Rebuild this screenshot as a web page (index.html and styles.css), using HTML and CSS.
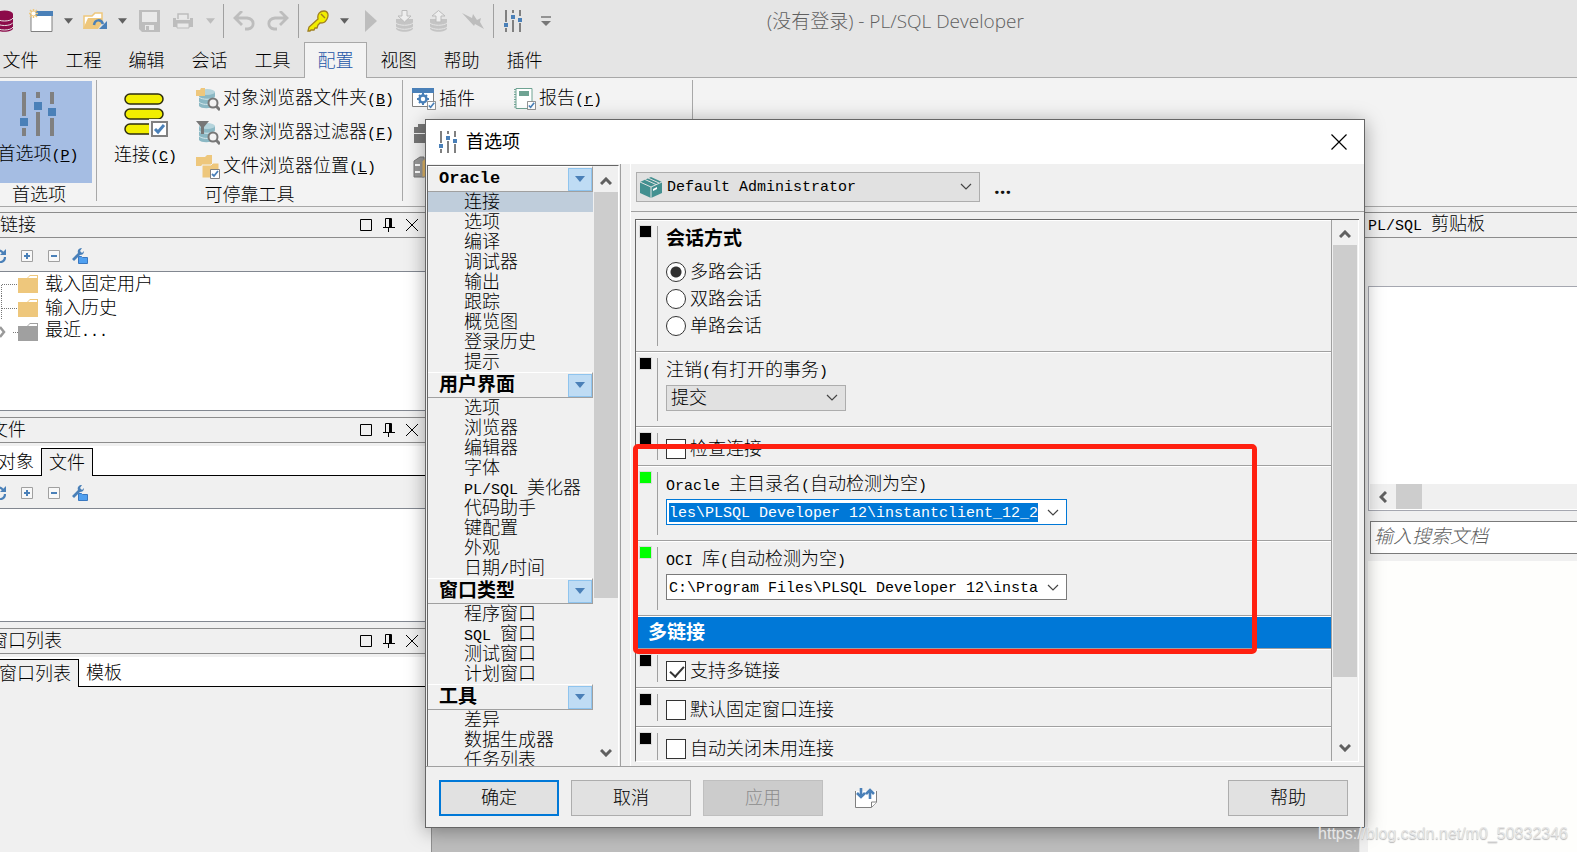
FILE: index.html
```html
<!DOCTYPE html>
<html lang="zh-CN">
<head>
<meta charset="utf-8">
<title>PL/SQL Developer</title>
<link rel="stylesheet" href="styles.css">
</head>
<body>
<svg class="defs" aria-hidden="true">
  <symbol id="sliders" viewBox="0 0 18 22"><path d="M2 0v12M2 18v4M9 0v3M9 10v12M16 0v6M16 13v9" stroke="#808080" stroke-width="2"/><path d="M0 13h4v4H0zM7 5h4v4H7zM14 8h4v4h-4z" fill="#4a80b8"/></symbol>
  <symbol id="caret" viewBox="0 0 10 6"><path d="M0 0h10L5 6z" fill="currentColor"/></symbol>
  <symbol id="db" viewBox="0 0 18 22"><path d="M0 4v14c0 5 17 5 17 0V4z" fill="currentColor"/><ellipse cx="8.500" cy="4" rx="8.500" ry="3.500" fill="currentColor"/><path d="M0 8c2 4 15 4 17 0M0 12.500c2 4 15 4 17 0M0 17c2 4 15 4 17 0" fill="none" stroke="#e5e5e5"/></symbol>
  <symbol id="max" viewBox="0 0 12 12"><path d="M.5.5h11v11H.5z" fill="none" stroke="#000"/></symbol>
  <symbol id="pin" viewBox="0 0 12 14"><path d="M2.500 9V.5h6V9M0 9.500h12M5.500 10v4" fill="none" stroke="#000"/><path d="M6 1h3v8H6z"/></symbol>
  <symbol id="cross" viewBox="0 0 12 12"><path d="M0 0l12 12M12 0L0 12" stroke="#000"/></symbol>
  <symbol id="refresh" viewBox="0 0 14 14"><path d="M1 6a5.500 5.500 0 0 1 10-2M13 8a5.500 5.500 0 0 1-10 3" fill="none" stroke="#4a80b8" stroke-width="2.200"/><path d="M14 0v6H8z" fill="#4a80b8"/></symbol>
  <symbol id="plus" viewBox="0 0 12 12"><path d="M.5.5h11v11H.5z" fill="#fff" fill-opacity=".5" stroke="#a0a0a0"/><path d="M3 6h6M6 3v6" stroke="#4a80b8" stroke-width="2"/></symbol>
  <symbol id="minus" viewBox="0 0 12 12"><path d="M.5.5h11v11H.5z" fill="#fff" fill-opacity=".5" stroke="#a0a0a0"/><path d="M3 6h6" stroke="#4a80b8" stroke-width="2"/></symbol>
  <symbol id="wrench" viewBox="0 0 16 16"><path d="M0 11l6-6c-1-3 1-5 4-5L8 3l2 2 2-2c0 3-2 4-4 4l-6 6z" fill="#4a80b8"/><path d="M6.500 15.500V8.500h3l1 1h5v6z" fill="#50a0f0" stroke="#3a78c0"/></symbol>
  <symbol id="folder" viewBox="0 0 20 18"><path d="M0 3h9l3-3h8v18H0z" fill="currentColor"/><path d="M10 3l2-2h7v2z" fill="#fff"/></symbol>
  <symbol id="check" viewBox="0 0 10 10"><path d="M.5.5h9v9h-9z" fill="#fff" stroke="#808080"/><path d="M2 5l2 2 4-5" fill="none" stroke="#4a80b8" stroke-width="1.800"/></symbol>
  <symbol id="up" viewBox="0 0 12 8"><path d="M1 7l5-5 5 5" fill="none" stroke="#606060" stroke-width="3"/></symbol>
  <symbol id="down" viewBox="0 0 12 8"><path d="M1 1l5 5 5-5" fill="none" stroke="#606060" stroke-width="3"/></symbol>
  <symbol id="thin" viewBox="0 0 12 7"><path d="M1 1l5 5 5-5" fill="none" stroke="#444" stroke-width="1.200"/></symbol>
  <symbol id="cylinder" viewBox="0 0 24 24"><path d="M3 5v14c2 3 12 3 16 0V5z" fill="#8bb8c4"/><ellipse cx="11" cy="5" rx="8" ry="3" fill="#b5d4dc"/><path d="M3 10c3 3 13 3 16 0M3 15c3 3 10 3 13 1" fill="none" stroke="#d5e8ec"/><circle cx="17" cy="16" r="4.500" fill="#f3f3f3" stroke="#777" stroke-width="2"/><path d="M20 19l4 4" stroke="#777" stroke-width="3"/></symbol>
</svg>

<div class="app">
  <header class="quick">
    <div class="tools">
      <button class="tool first" aria-label="数据库"><svg class="dbi" width="18" height="22"><use href="#db"/></svg></button>
      <button class="tool" aria-label="新建"><svg width="24" height="24" viewBox="0 0 24 24"><path d="M2 5v17.500h21V7" fill="#fff" stroke="#808080"/><path d="M6 2h18v5H6z" fill="#4a80b8"/><path d="M4.500 0v9M0 4.500h9M1 1l7 7M8 1L1 8" stroke="#eec77c" stroke-width="1.500"/><circle cx="4.500" cy="4.500" r="2" fill="#fff"/></svg></button>
      <button class="tool drop" aria-label="新建选项"><svg width="9" height="6"><use href="#caret"/></svg></button>
      <button class="tool" aria-label="打开"><svg width="24" height="18" viewBox="0 0 24 18"><path d="M1 17V4h8l3-3h7v9" fill="#fff" stroke="#eec77c" stroke-width="1.500"/><path d="M0 17L5 6h14v5l-4 6z" fill="#eec77c"/><path d="M11 13c1-6 7-6 9-1" fill="none" stroke="#4a80b8" stroke-width="2.500"/><path d="M24 9v8h-8z" fill="#4a80b8"/></svg></button>
      <button class="tool drop" aria-label="打开选项"><svg width="9" height="6"><use href="#caret"/></svg></button>
      <button class="tool" aria-label="保存"><svg width="21" height="22" viewBox="0 0 21 22"><path d="M0 0h21v22H3l-3-3z" fill="#bdbdbd"/><path d="M3 2h15v10H3zM6 15h9v5H6z" fill="#e9e9e9"/><path d="M7 16h3v4H7z" fill="#bdbdbd"/></svg></button>
      <button class="tool" aria-label="打印"><svg width="20" height="16" viewBox="0 0 20 16"><path d="M5 6V1h10v5" fill="#e9e9e9" stroke="#bdbdbd" stroke-width="1.500"/><path d="M0 5h3v2h14V5h3v9H0z" fill="#bdbdbd"/><path d="M4 10h12v5H4z" fill="#e9e9e9" stroke="#bdbdbd"/></svg></button>
      <button class="tool drop off" aria-label="打印选项"><svg width="9" height="6"><use href="#caret"/></svg></button>
      <span class="vsep"></span>
      <button class="tool" aria-label="撤销"><svg width="22" height="20" viewBox="0 0 22 20"><path d="M2 7h12c8 1 8 10 1 11h-3M9 0L2 7l7 7" fill="none" stroke="#bdbdbd" stroke-width="2.800"/></svg></button>
      <button class="tool" aria-label="重做"><svg width="22" height="20" viewBox="0 0 22 20"><path d="M20 7H8C0 8 0 17 7 18h3M13 0l7 7-7 7" fill="none" stroke="#bdbdbd" stroke-width="2.800"/></svg></button>
      <span class="vsep"></span>
      <button class="tool key" aria-label="登录"><svg width="22" height="22" viewBox="0 0 22 22"><path d="M1 21l1-4 9-8c-1-5 2-8 6-8s5 4 3 8-4 4-7 4l-2 2-1 3H8l-1 2H4l-1 1z" fill="#f2ee00" stroke="#a08020" stroke-width="1.300"/><path d="M14 4l4 4" stroke="#a08020" stroke-width="1.500"/></svg></button>
      <button class="tool drop" aria-label="登录选项"><svg width="9" height="6"><use href="#caret"/></svg></button>
      <button class="tool" aria-label="执行"><svg width="12" height="22" viewBox="0 0 12 22"><path d="M0 0l12 11L0 22z" fill="#bdbdbd"/></svg></button>
      <button class="tool" aria-label="提交"><svg width="18" height="22" viewBox="0 0 18 22"><path d="M0 9v9c0 5 17 5 17 0V9z" fill="#c4c4c4"/><path d="M0 13c3 3 14 3 17 0M0 17c3 3 14 3 17 0" fill="none" stroke="#e5e5e5"/><path d="M6 .5h5V6h4l-6.500 6L2 6h4z" fill="#eee" stroke="#bbb"/></svg></button>
      <button class="tool" aria-label="回滚"><svg width="18" height="22" viewBox="0 0 18 22"><path d="M0 9v9c0 5 17 5 17 0V9z" fill="#c4c4c4"/><path d="M0 13c3 3 14 3 17 0M0 17c3 3 14 3 17 0" fill="none" stroke="#e5e5e5"/><path d="M6 12h5V6h4L8.500.500 2 6h4z" fill="#eee" stroke="#bbb"/></svg></button>
      <button class="tool" aria-label="中断"><svg width="22" height="18" viewBox="0 0 22 18"><path d="M0 1l10 5 1-4 4 6 4-2-1 4 4 7-9-5-1 2z" fill="#bdbdbd"/></svg></button>
      <span class="vsep"></span>
      <button class="tool key" aria-label="首选项"><svg width="18" height="22"><use href="#sliders"/></svg></button>
      <button class="tool" aria-label="更多"><svg width="10" height="11" viewBox="0 0 10 11"><path d="M0 1h10" stroke="#777" stroke-width="1.500"/><path d="M0 5h10l-5 5z" fill="#777"/></svg></button>
    </div>
    <h1 class="wintitle">(没有登录) - PL/SQL Developer</h1>
  </header>

  <nav class="menu">
    <button>文件</button><button>工程</button><button>编辑</button><button>会话</button><button>工具</button><button class="on">配置</button><button>视图</button><button>帮助</button><button>插件</button>
  </nav>

  <section class="ribbon">
    <div class="group g1">
      <button class="big prefs"><svg width="36" height="44"><use href="#sliders"/></svg><span>首选项<i>(<u>P</u>)</i></span></button>
      <div class="caption">首选项</div>
    </div>
    <div class="group g2">
      <div class="grow">
        <button class="big"><svg width="44" height="44" viewBox="0 0 44 44"><g fill="#f2ee00" stroke="#2c2c10" stroke-width="1.500"><rect x="1" y="1" width="38" height="10" rx="5"/><rect x="1" y="16" width="38" height="10" rx="5"/><rect x="1" y="31" width="38" height="10" rx="5"/></g><path d="M25 26h19v18H25z" fill="#f3f3f3"/><path d="M28 29h15v14H28z" fill="#fff" stroke="#808080" stroke-width="2"/><path d="M31 36l3 3 6-7" fill="none" stroke="#4a80b8" stroke-width="3"/></svg><span>连接<i>(<u>C</u>)</i></span></button>
        <div class="links">
          <button><svg width="24" height="24" viewBox="0 0 24 24"><use href="#cylinder"/><path d="M0 3h4l1-2h4v8H0z" fill="#eec77c"/></svg><span>对象浏览器文件夹<i>(<u>B</u>)</i></span></button>
          <button><svg width="24" height="24" viewBox="0 0 24 24"><use href="#cylinder"/><path d="M0 0h13L8 6v7H5V6z" fill="#777"/></svg><span>对象浏览器过滤器<i>(<u>F</u>)</i></span></button>
          <button><svg width="24" height="24" viewBox="0 0 24 24"><path d="M0 2h9l2-2h5v11H0z" fill="#eec77c"/><path d="M6 10h9l2-2h6v15H6z" fill="#eec77c" stroke="#f3f3f3"/><use href="#check" x="14" y="14" width="10" height="10"/></svg><span>文件浏览器位置<i>(<u>L</u>)</i></span></button>
        </div>
      </div>
      <div class="caption">可停靠工具</div>
    </div>
    <div class="group g3">
      <div class="links">
        <button><svg width="24" height="22" viewBox="0 0 24 22"><path d="M.5.5h21v18H.5z" fill="#fff" stroke="#808080"/><path d="M0 0h22v5H0z" fill="#4a80b8"/><circle cx="11" cy="11" r="3.500" fill="none" stroke="#4a80b8" stroke-width="2.500"/><path d="M11 5v3M11 14v3M5 11h3M14 11h3M7 7l2 2M15 7l-2 2M7 15l2-2" stroke="#4a80b8" stroke-width="2"/><use href="#check" x="15" y="13" width="9" height="9"/></svg><span>插件</span></button>
        <button aria-label="工具"><svg width="24" height="20" viewBox="0 0 24 20"><path d="M2 4h4V1h10v3h8v6H2zM2 11h22v9H2z" fill="#777"/></svg></button>
        <button aria-label="文档"><svg width="24" height="24" viewBox="0 0 24 24"><path d="M2 6l6-4h4v20H2z" fill="#999" stroke="#777"/><path d="M10 6l5-4h6v20H10z" fill="#e4b867" stroke="#999"/><path d="M3 10h5M3 17h5" stroke="#fff" stroke-width="2"/></svg></button>
      </div>
      <div class="links">
        <button><svg width="22" height="22" viewBox="0 0 22 22"><path d="M2 .5h16v20H2z" fill="#fff" stroke="#6fa393"/><path d="M5 3h10v5H5z" fill="#6fa393"/><path d="M1 1v20" stroke="#6fa393" stroke-width="2" stroke-dasharray="1 1.500"/><use href="#check" x="13" y="13" width="9" height="9"/></svg><span>报告<i>(<u>r</u>)</i></span></button>
      </div>
    </div>
  </section>

  <main class="work">
    <aside class="left">
      <section class="dock p1">
        <header class="cap"><h2>链接</h2><svg width="12" height="12"><use href="#max"/></svg><svg width="12" height="14"><use href="#pin"/></svg><svg width="12" height="12"><use href="#cross"/></svg></header>
        <div class="mini"><svg width="14" height="14"><use href="#refresh"/></svg><svg width="12" height="12"><use href="#plus"/></svg><svg width="12" height="12"><use href="#minus"/></svg><svg width="16" height="16"><use href="#wrench"/></svg></div>
        <ul class="tree">
          <li><svg class="dots" width="18" height="24" viewBox="0 0 18 24"><path d="M1.500 24V12.500H18" fill="none" stroke="#777" stroke-dasharray="1 1"/></svg><svg class="fold" width="20" height="18"><use href="#folder"/></svg><span>载入固定用户</span></li>
          <li><svg class="dots" width="18" height="24" viewBox="0 0 18 24"><path d="M1.500 0v24M2 12.500h16" fill="none" stroke="#777" stroke-dasharray="1 1"/></svg><svg class="fold" width="20" height="18"><use href="#folder"/></svg><span>输入历史</span></li>
          <li><svg class="dots" width="18" height="24" viewBox="0 0 18 24"><path d="M13 12.500h5" stroke="#777" stroke-dasharray="1 1"/><path d="M0 7l4 5-4 5" fill="none" stroke="#999" stroke-width="2.500"/></svg><svg class="fold dim" width="20" height="18"><use href="#folder"/></svg><span>最近<i lang="en">...</i></span></li>
        </ul>
      </section>
      <section class="dock p2">
        <header class="cap"><h2 class="cut">文件</h2><svg width="12" height="12"><use href="#max"/></svg><svg width="12" height="14"><use href="#pin"/></svg><svg width="12" height="12"><use href="#cross"/></svg></header>
        <div class="tabs"><button>对象</button><button class="on">文件</button></div>
        <div class="mini"><svg width="14" height="14"><use href="#refresh"/></svg><svg width="12" height="12"><use href="#plus"/></svg><svg width="12" height="12"><use href="#minus"/></svg><svg width="16" height="16"><use href="#wrench"/></svg></div>
        <div class="blank"></div>
      </section>
      <section class="dock p3">
        <header class="cap"><h2 class="cut">窗口列表</h2><svg width="12" height="12"><use href="#max"/></svg><svg width="12" height="14"><use href="#pin"/></svg><svg width="12" height="12"><use href="#cross"/></svg></header>
        <div class="tabs"><button class="on">窗口列表</button><button>模板</button></div>
      </section>
    </aside>
    <div class="mdi"></div>
    <aside class="right">
      <header class="cap"><h2><i>PL/SQL </i>剪贴板</h2></header>
      <div class="clip">
        <div class="hbar"><svg width="8" height="12" viewBox="0 0 8 12"><path d="M7 1L2 6l5 5" fill="none" stroke="#606060" stroke-width="3"/></svg><span></span></div>
      </div>
      <input class="search" type="text" placeholder="输入搜索文档" aria-label="输入搜索文档">
      <div class="doc"></div>
    </aside>
  </main>
</div>

<div class="dialog" role="dialog" aria-labelledby="dt">
  <header class="dhead"><svg width="18" height="22"><use href="#sliders"/></svg><h2 id="dt">首选项</h2><button aria-label="关闭"><svg width="16" height="16" viewBox="0 0 16 16"><path d="M.5.5l15 15M15.500.500l-15 15" stroke="#000" stroke-width="1.200"/></svg></button></header>
  <div class="dbody">
    <div class="navbox">
      <div class="navlist">
        <h3><i>Oracle</i><button aria-label="展开"><svg width="10" height="6"><use href="#caret"/></svg></button></h3>
        <ul><li class="on">连接</li><li>选项</li><li>编译</li><li>调试器</li><li>输出</li><li>跟踪</li><li>概览图</li><li>登录历史</li><li>提示</li></ul>
        <h3>用户界面<button aria-label="展开"><svg width="10" height="6"><use href="#caret"/></svg></button></h3>
        <ul><li>选项</li><li>浏览器</li><li>编辑器</li><li>字体</li><li><i>PL/SQL </i>美化器</li><li>代码助手</li><li>键配置</li><li>外观</li><li>日期<i>/</i>时间</li></ul>
        <h3>窗口类型<button aria-label="展开"><svg width="10" height="6"><use href="#caret"/></svg></button></h3>
        <ul><li>程序窗口</li><li><i>SQL </i>窗口</li><li>测试窗口</li><li>计划窗口</li></ul>
        <h3>工具<button aria-label="展开"><svg width="10" height="6"><use href="#caret"/></svg></button></h3>
        <ul><li>差异</li><li>数据生成器</li><li>任务列表</li></ul>
      </div>
      <div class="vbar"><svg width="12" height="8"><use href="#up"/></svg><span class="track"><span class="thumb navthumb"></span></span><svg width="12" height="8"><use href="#down"/></svg></div>
    </div>
    <div class="pane">
      <div class="profile">
        <div class="pick wide"><svg class="box" width="22" height="22" viewBox="0 0 22 22"><path d="M0 6L11 1l11 5v11l-11 5L0 17z" fill="#439090"/><path d="M0 6l11 5 11-5M11 11v11M5 3.500l11 5M8 2l11 5" fill="none" stroke="#e1e1e1"/><path d="M13 13l4-2v2l-4 2z" fill="#fff"/></svg><select aria-label="配置文件"><option>Default Administrator</option></select><svg class="arrow" width="12" height="7"><use href="#thin"/></svg></div>
        <button class="dots3">...</button>
      </div>
      <div class="optbox">
        <form class="opts">
          <div class="opt radios"><b class="mark"></b><div class="fields"><h4>会话方式</h4>
            <label><input type="radio" name="s" checked>多路会话</label>
            <label><input type="radio" name="s">双路会话</label>
            <label><input type="radio" name="s">单路会话</label></div></div>
          <div class="opt"><b class="mark"></b><div class="fields combo"><label for="lo">注销<i>(</i>有打开的事务<i>)</i></label><div class="pick short"><select class="cjk" id="lo"><option>提交</option></select><svg class="arrow" width="12" height="7"><use href="#thin"/></svg></div></div></div>
          <div class="opt"><b class="mark"></b><div class="fields tick"><label><input type="checkbox">检查连接</label></div></div>
          <div class="opt"><b class="mark green"></b><div class="fields combo"><label for="oh"><i>Oracle </i>主目录名<i>(</i>自动检测为空<i>)</i></label><div class="edit focus"><input id="oh" type="text" value="les\PLSQL Developer 12\instantclient_12_2"><button type="button" aria-label="展开"><svg width="12" height="7"><use href="#thin"/></svg></button></div></div></div>
          <div class="opt"><b class="mark green"></b><div class="fields combo"><label for="oci"><i>OCI </i>库<i>(</i>自动检测为空<i>)</i></label><div class="edit"><input id="oci" type="text" value="C:\Program Files\PLSQL Developer 12\insta"><button type="button" aria-label="展开"><svg width="12" height="7"><use href="#thin"/></svg></button></div></div></div>
          <h4 class="band">多链接</h4>
          <div class="opt"><b class="mark"></b><div class="fields tick"><label><input type="checkbox" checked>支持多链接</label></div></div>
          <div class="opt"><b class="mark"></b><div class="fields tick"><label><input type="checkbox">默认固定窗口连接</label></div></div>
          <div class="opt"><b class="mark"></b><div class="fields tick"><label><input type="checkbox">自动关闭未用连接</label></div></div>
        </form>
        <div class="vbar"><svg width="12" height="8"><use href="#up"/></svg><span class="track"><span class="thumb optthumb"></span></span><svg width="12" height="8"><use href="#down"/></svg></div>
      </div>
    </div>
  </div>
  <footer class="dfoot">
    <button class="btn ok">确定</button><button class="btn">取消</button><button class="btn" disabled>应用</button>
    <button class="io" aria-label="导入导出"><svg width="22" height="20" viewBox="0 0 22 20"><path d="M.500 3v16.500h16l5-5V3" fill="#fff" stroke="#808080"/><path d="M16.500 19v-5H22" fill="#fff" stroke="#808080"/><path d="M6 0v8M15 11V3" stroke="#4a80b8" stroke-width="2.600"/><path d="M2 5l4 4 4-4M11 6l4-4 4 4" fill="none" stroke="#4a80b8" stroke-width="2.600"/></svg></button>
    <button class="btn help">帮助</button>
  </footer>
  <div class="redbox"></div>
</div>
<div class="watermark">https://blog.csdn.net/m0_50832346</div>
</body>
</html>
```

FILE: styles.css
```css
* { box-sizing: border-box; }
html, body { height: 100%; }
body {
  margin: 0;
  position: relative;
  overflow: hidden;
  background: #f0f0f0;
  color: #000;
  font: 300 18px/20px "Liberation Sans", "Noto Sans CJK SC", sans-serif;
}
button, input, select { font: inherit; color: inherit; margin: 0; padding: 0; }
button { background: none; border: 0; white-space: nowrap; }
h1, h2, h3, h4, ul { margin: 0; padding: 0; font-weight: 300; font-size: 18px; list-style: none; }
i { font: 15px/20px "Liberation Mono", monospace; white-space: pre; }
svg { display: block; flex: none; }
.defs { position: absolute; width: 0; height: 0; }

.app { display: flex; flex-direction: column; height: 100%; }

/* quick access bar */
.quick { display: flex; align-items: center; height: 42px; background: #e5e5e5; }
.tools { display: flex; align-items: center; }
.tool { display: flex; justify-content: center; align-items: center; width: 34px; height: 34px; color: #606060; }
.tool.drop { width: 20px; }
.tool.off { color: #bdbdbd; }
.tool.first { width: 24px; justify-content: flex-start; }
.tool.key { width: 32px; }
.dbi { margin-left: -4px; color: #8c0b4a; }
.vsep { width: 1px; height: 34px; margin: 0 3px; background: #a0a0a0; }
.wintitle { margin-left: 204px; font: 300 19px/24px "Open Sans", "Noto Sans CJK SC", sans-serif; color: #606060; }

/* ribbon tabs */
.menu { display: flex; height: 36px; background: #e5e5e5; border-bottom: 1px solid #a8a8a8; }
.menu button { width: 63px; height: 36px; flex: none; border: 1px solid transparent; border-bottom: 0; }
.menu button:first-child { margin-left: -11px; }
.menu .on { color: #2456a8; background: #f3f3f3; border-color: #a8a8a8; }

/* ribbon */
.ribbon { display: flex; height: 129px; padding-top: 2px; background: #f3f3f3; border-bottom: 1px solid #a8a8a8; }
.group { display: flex; flex-direction: column; height: 121px; border-right: 1px solid #a8a8a8; }
.grow { display: flex; height: 103px; }
.caption { text-align: center; height: 18px; line-height: 24px; }
.big { display: flex; flex-direction: column; align-items: center; gap: 8px; height: 102px; padding-top: 11px; }
.prefs { width: 92px; margin-top: 1px; padding-right: 16px; background: #a5bde3; }
.g1 { width: 97px; }
.g1 .caption { width: 78px; }
.g2 { width: 306px; }
.g2 .big { width: 97px; padding-top: 13px; }
.links { display: flex; flex-direction: column; }
.links button { display: flex; align-items: center; gap: 3px; height: 34px; padding-top: 2px; }
.g2 .links { margin-left: 2px; padding-top: 1px; }
.g3 { flex-direction: row; width: 290px; padding: 1px 0 0 9px; }
.g3 .links { width: 102px; }

/* work area */
.work { display: flex; flex: 1; min-height: 0; background: #f0f0f0; }
.left { display: flex; flex-direction: column; width: 432px; border-right: 1px solid #909090; padding-top: 5px; }
.mdi { flex: 1; background: #bdbdbd; }
.cap { display: flex; align-items: center; gap: 11px; height: 26px; padding-right: 13px; border-top: 1px solid #8c8c8c; border-bottom: 1px solid #8c8c8c; }
.cap h2 { flex: 1; }
.cut { margin-left: -10px; }
.mini { display: flex; align-items: center; gap: 15px; height: 33px; margin-left: -8px; padding-top: 3px; }
.mini svg:nth-child(4) { margin-left: -3px; }
.tree, .blank { background: #fff; border-top: 1px solid #828790; border-bottom: 1px solid #828790; }
.tree { height: 140px; }
.tree li { display: flex; align-items: center; height: 24px; }
.tree span { padding-bottom: 1px; }
.fold { margin-right: 7px; color: #eec77c; }
.dim { color: #a0a0a0; }
.p2, .p3 { margin-top: 6px; }
.tabs { display: flex; align-items: flex-end; height: 30px; margin-top: 3px; background: #fff; border-bottom: 1px solid #000; }
.tabs button { height: 27px; padding: 0 7px; flex: none; }
.tabs .on { height: 28px; background: #f0f0f0; border: 1px solid #000; border-bottom: 0; margin-bottom: -1px; }
.tabs button:first-child { margin-left: -2px; padding-left: 0; }
.p2 .mini { height: 32px; padding-top: 2px; }
.blank { height: 114px; }

.right { display: flex; flex-direction: column; width: 218px; padding: 5px 0 0 8px; border-left: 1px solid #e0e0e0; }
.right .cap { margin-left: -8px; padding-left: 8px; flex: none; }
.right h2 { white-space: nowrap; }
.clip { display: flex; flex-direction: column; justify-content: flex-end; height: 225px; margin-top: 48px; padding: 0 0 1px 1px; flex: none; background: #fff; border: 1px solid #a5a7b0; border-right: 0; }
.hbar { display: flex; align-items: center; height: 25px; padding-left: 9px; background: #f0f0f0; }
.hbar span { width: 26px; height: 25px; margin-left: 9px; background: #cdcdcd; }
.search { width: 207px; height: 33px; margin: 10px 0 7px 2px; padding: 0 3px 2px; flex: none; border: 1px solid #7a7a7a; border-right: 0; border-radius: 0; background: #fff; font-size: 19px; font-style: italic; }
.search::placeholder { color: #606060; }
.doc { flex: 1; background: #fefefc; }

/* preferences dialog */
.dialog { position: absolute; inset: 119px 212px 24px 425px; display: flex; flex-direction: column; background: #f0f0f0; border: 1px solid #666; box-shadow: 0 3px 18px rgba(0, 0, 0, .35); }
.dhead { display: flex; align-items: center; height: 44px; padding: 0 17px 0 13px; background: #fff; flex: none; }
.dhead h2 { flex: 1; margin-left: 9px; font-weight: 400; color: #000; }
.dbody { display: flex; flex: 1; min-height: 0; border-bottom: 1px solid #a0a0a0; }
.navbox { display: flex; width: 195px; margin-right: 9px; padding: 1px 1px 0 1px; border-right: 1px solid #a0a0a0; }
.navlist { flex: 1; overflow: hidden; border-top: 1px solid #666; border-left: 1px solid #666; }
.navlist h3 { display: flex; align-items: center; justify-content: space-between; height: 26px; padding-left: 11px; border-top: 1px solid #fff; border-bottom: 1px solid #a0a0a0; border-right: 1px solid #a0a0a0; font-weight: 700; font-size: 19px; color: #000; }
.navlist h3 i { font-weight: 700; font-size: 17px; }
.navlist h3 button { display: flex; align-items: center; justify-content: center; width: 24px; height: 23px; background: #bfdcf4; border: 1px solid #8fc4ee; color: #4a80b8; }
.navlist li { height: 20px; padding-left: 36px; }
.navlist .on { background: #bfcddb; }
.vbar { display: flex; flex-direction: column; align-items: center; width: 26px; padding: 11px 1px 9px; border-right: 1px solid #fff; }
.navbox .vbar { border-top: 1px solid #666; }
.track { flex: 1; width: 24px; margin: 7px 0 8px; }
.thumb { display: block; background: #cdcdcd; }
.navthumb { height: 74%; }
.optthumb { height: 88%; }

.pane { display: flex; flex-direction: column; flex: 1; min-width: 0; border-left: 1px solid #fff; }
.profile { display: flex; align-items: center; height: 48px; padding: 0 5px 2px; border-bottom: 1px solid #a0a0a0; flex: none; }
.pick { position: relative; display: flex; }
.pick select { width: 100%; appearance: none; border: 1px solid #adadad; border-radius: 0; background: #e1e1e1; font-family: "Liberation Mono", monospace; font-size: 15px; }
.pick .cjk { font-family: "Liberation Sans", "Noto Sans CJK SC", sans-serif; font-size: 18px; }
.wide { width: 344px; }
.wide select { height: 30px; padding: 2px 0 0 30px; }
.short { width: 180px; }
.short select { height: 26px; padding-left: 4px; }
.arrow { position: absolute; right: 8px; top: 50%; margin-top: -4px; pointer-events: none; }
.box { position: absolute; left: 4px; top: 4px; }
.dots3 { margin-left: 14px; font: 700 20px/24px "Open Sans", sans-serif; color: #111; }
.optbox { display: flex; flex: 1; min-height: 0; margin: 7px 5px 4px 4px; border-top: 1px solid #666; border-left: 1px solid #666; border-bottom: 1px solid #fff; }
.optbox .vbar { width: 27px; padding-top: 10px; }
.opts { flex: 1; overflow: hidden; border-right: 1px solid #a0a0a0; }
.opt { display: flex; gap: 6px; padding: 5px 0 5px 4px; border-top: 1px solid #fff; border-bottom: 1px solid #a0a0a0; }
.mark { width: 11px; height: 11px; background: #000; outline: 1px solid #dadada; }
.green { background: #0f0; }
.fields { flex: 1; padding-left: 8px; border-left: 1px solid #a0a0a0; }
.fields label { display: flex; align-items: center; width: max-content; }
.fields h4 { height: 32px; line-height: 26px; font-size: 19px; font-weight: 700; color: #000; }
.radios { height: 132px; }
.radios label { height: 27px; gap: 4px; }
.combo { height: 63px; }
.fields.combo label { display: block; height: 27px; line-height: 24px; }
.tick { height: 27px; }
.tick label { height: 27px; gap: 4px; padding-top: 5px; }
.fields input[type=radio], .fields input[type=checkbox] { appearance: none; width: 20px; height: 20px; background: #fff; border: 1px solid #333; }
.fields input[type=radio] { border-radius: 50%; }
.fields input[type=radio]:checked { background: radial-gradient(circle, #333 5px, #fff 6px); }
.fields input[type=checkbox]:checked::before { content: ""; display: block; width: 6px; height: 12px; margin: 1px 0 0 6px; border: solid #333; border-width: 0 2px 2px 0; transform: rotate(42deg); }
.edit { display: flex; align-items: center; width: 401px; height: 26px; padding: 3px 2px; background: #fff; border: 1px solid #7a7a7a; }
.edit input { width: 369px; height: 19px; padding-top: 2px; border: 0; background: none; font-family: "Liberation Mono", monospace; font-size: 15px; line-height: 17px; color: #000; }
.edit button { margin-left: 9px; }
.edit.focus { border-color: #0078d7; }
.edit.focus input { background: #0078d7; color: #fff; }
.band { height: 33px; padding-left: 12px; line-height: 31px; background: #0078d7; border-top: 1px solid #fff; border-bottom: 1px solid #a0a0a0; font-size: 19px; font-weight: 700; color: #fff; }

.dfoot { display: flex; align-items: center; gap: 12px; height: 60px; padding: 1px 16px 0 13px; flex: none; }
.btn { width: 120px; height: 36px; border: 1px solid #adadad; background: #e1e1e1; }
.ok { border: 2px solid #0078d7; }
.btn:disabled { background: #ccc; border-color: #bfbfbf; color: #8c8c8c; }
.io { margin-left: 20px; }
.help { margin-left: auto; }

.redbox { position: absolute; left: 207px; right: 107px; top: 324px; height: 210px; border: 5px solid #ff2010; border-radius: 5px; pointer-events: none; }
.watermark { position: absolute; right: 9px; bottom: 8px; font: 16px/20px "Liberation Sans", sans-serif; color: #e6e6e6; text-shadow: 0 1px 1px #b5b5b5; }
```
